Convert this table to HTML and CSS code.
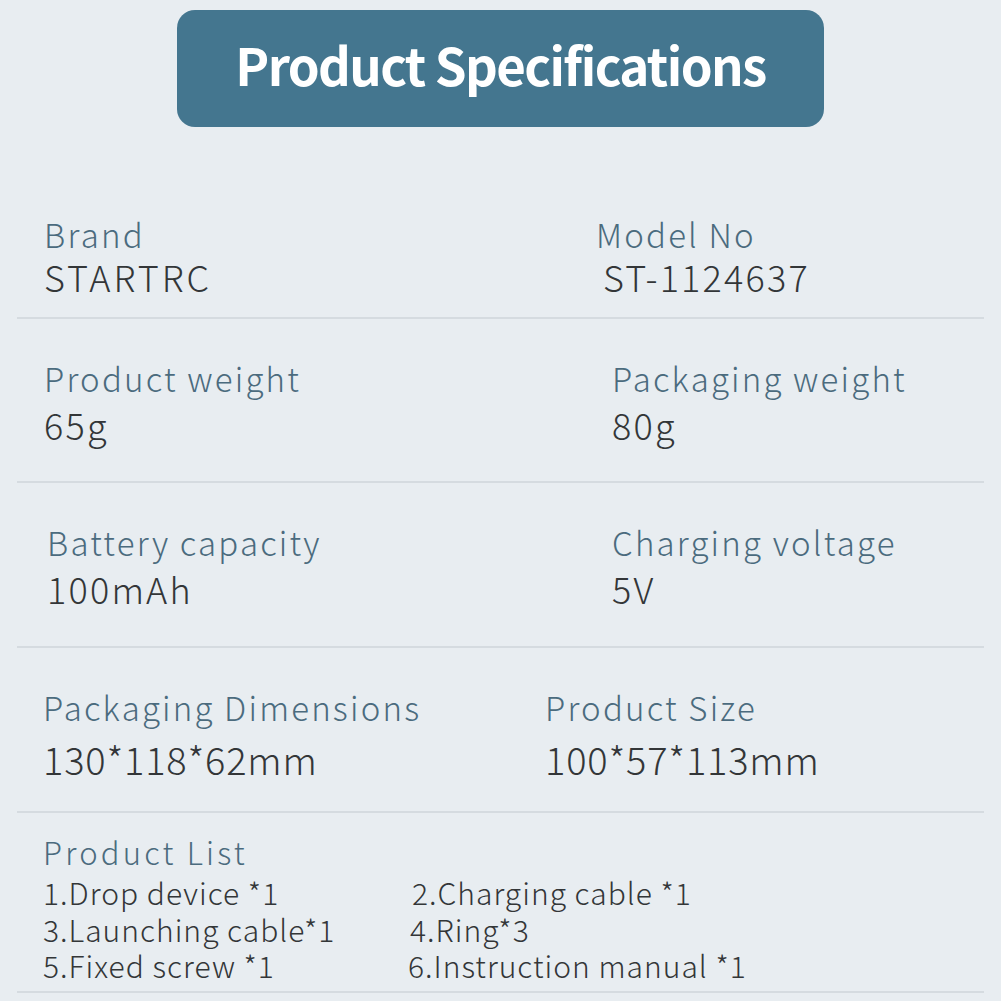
FILE: index.html
```html
<!DOCTYPE html>
<html lang="en">
<head>
<meta charset="utf-8">
<link rel="stylesheet" href="styles.css">
</head>
<body>
<div class="page">
  <header class="banner"><h1 class="banner-title">Product Specifications</h1></header>

  <section class="row row-1">
    <div class="cell"><div class="label">Brand</div><div class="value value-wide">STARTRC</div></div>
    <div class="cell"><div class="label">Model No</div><div class="value value-shift">ST-1124637</div></div>
  </section>

  <section class="row row-2">
    <div class="cell"><div class="label">Product weight</div><div class="value">65g</div></div>
    <div class="cell"><div class="label">Packaging weight</div><div class="value">80g</div></div>
  </section>

  <section class="row row-3">
    <div class="cell cell-in"><div class="label">Battery capacity</div><div class="value">100mAh</div></div>
    <div class="cell"><div class="label">Charging voltage</div><div class="value">5V</div></div>
  </section>

  <section class="row row-4">
    <div class="cell"><div class="label">Packaging Dimensions</div><div class="value value-lg">130*118*62mm</div></div>
    <div class="cell"><div class="label">Product Size</div><div class="value value-lg">100*57*113mm</div></div>
  </section>

  <section class="list">
    <div class="list-label">Product List</div>
    <div class="list-grid">
      <span>1.Drop device *1</span><span>2.Charging cable *1</span>
      <span>3.Launching cable*1</span><span class="nudge-2">4.Ring*3</span>
      <span>5.Fixed screw *1</span><span class="nudge-4">6.Instruction manual *1</span>
    </div>
  </section>
</div>
</body>
</html>
```

FILE: styles.css
```css
html, body {
  margin: 0;
  padding: 0;
  background: #e8edf1;
}
body {
  width: 1001px;
  height: 1001px;
  overflow: hidden;
  font-family: "Noto Sans CJK SC", "Noto Sans", sans-serif;
}
.page {
  display: flex;
  flex-direction: column;
}
.banner {
  align-self: flex-start;
  margin: 10px 0 0 177px;
  width: 647px;
  height: 117px;
  border-radius: 18px;
  background: #44768f;
  display: flex;
  align-items: center;
  justify-content: center;
}
.banner-title {
  margin: 0;
  color: #ffffff;
  font-weight: 700;
  font-size: 51px;
  letter-spacing: -1.6px;
  line-height: 1;
  padding-bottom: 8px;
}
.row {
  display: grid;
  margin: 0 17px;
  border-bottom: 2px solid #d5dbe0;
  box-sizing: border-box;
}
.row-1 { height: 192px; padding-top: 84px; grid-template-columns: 579px 1fr; }
.row-2 { height: 164px; padding-top: 36px; grid-template-columns: 595px 1fr; }
.row-3 { height: 165px; padding-top: 36px; grid-template-columns: 595px 1fr; }
.row-4 { height: 165px; padding-top: 36px; grid-template-columns: 528px 1fr; }
.row-1 .cell:first-child, .row-2 .cell:first-child { padding-left: 27px; }
.row-4 .cell:first-child { padding-left: 26px; }
.cell-in { padding-left: 30px; }
.label {
  color: #4b6b7e;
  font-size: 33px;
  font-weight: 300;
  letter-spacing: 2.2px;
  line-height: 46px;
}
.value {
  color: #333638;
  font-size: 36px;
  font-weight: 300;
  line-height: 46px;
  letter-spacing: 2.2px;
}
.value-wide { letter-spacing: 2.9px; }
.row-1 .value { margin-top: -4px; }
.value-shift { padding-left: 7px; }
.value-lg { font-size: 38px; line-height: 58px; letter-spacing: 0.8px; }
.list {
  margin: 0 17px;
  height: 180px;
  box-sizing: border-box;
  padding: 17px 0 0 26px;
  border-bottom: 2px solid #d5dbe0;
}
.list-label {
  color: #4b6b7e;
  font-size: 31px;
  font-weight: 300;
  letter-spacing: 3.2px;
  line-height: 44px;
}
.list-grid {
  display: grid;
  grid-template-columns: 369px 1fr;
  color: #333638;
  font-size: 30px;
  font-weight: 300;
  letter-spacing: 1px;
  line-height: 36.5px;
}
.nudge-2 { margin-left: -2px; }
.nudge-4 { margin-left: -4px; }
```
